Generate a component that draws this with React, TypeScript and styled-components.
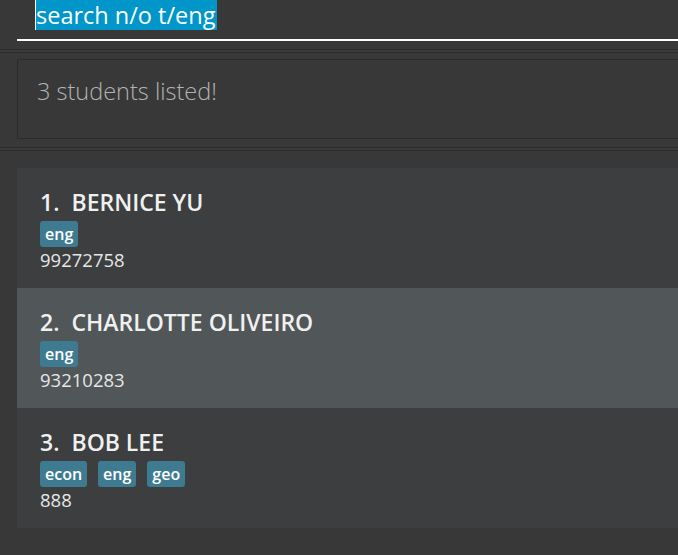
import React from "react";
import styled, { createGlobalStyle } from "styled-components";

const Global = createGlobalStyle`
  html, body { margin: 0; padding: 0; background: #383838; }
  body { font-family: "Open Sans", "Noto Sans", sans-serif; overflow: hidden; }
`;

const Window = styled.div`
  width: 678px;
  height: 555px;
  display: flex;
  flex-direction: column;
  background: #383838;
  overflow: hidden;
`;

const CommandPane = styled.div`
  height: 49px;
  padding-left: 17px;
  box-sizing: border-box;
  flex-shrink: 0;
`;

const CommandField = styled.div`
  height: 41px;
  box-sizing: border-box;
  border-bottom: 2px solid #ffffff;
  padding-left: 18px;
  display: flex;
  align-items: flex-start;
`;

const Selected = styled.span`
  display: inline-block;
  background: #0096c9;
  color: #ffffff;
  font-size: 23.5px;
  line-height: 30px;
  height: 30px;
  padding: 0 2px 0 0;
  border-left: 1px solid #ffffff;
  box-sizing: content-box;
`;

const Divider = styled.div`
  height: 2px;
  border-top: 1px solid #2b2b2b;
  border-bottom: 1px solid #2b2b2b;
  background: #3a3a3a;
  flex-shrink: 0;
`;

const ResultPane = styled.div`
  padding: 6px 0 8px 17px;
  flex-shrink: 0;
`;

const ResultBox = styled.div`
  height: 80px;
  border: 1px solid #2b2b2b;
  border-right: none;
  box-sizing: border-box;
  padding: 14px 19px;
  color: #b3b3b3;
  font-size: 23.5px;
  line-height: 34px;
  font-weight: 300;
`;

const ListPane = styled.div`
  padding: 17px 0 0 17px;
  display: flex;
  flex-direction: column;
`;

const Card = styled.div<{ $selected?: boolean }>`
  height: 120px;
  flex-shrink: 0;
  box-sizing: border-box;
  background: ${(p) => (p.$selected ? "#515658" : "#3c3e3f")};
  padding: 17px 23px 0;
  display: flex;
  flex-direction: column;
  color: #ffffff;
`;

const Name = styled.div`
  font-size: 23px;
  font-weight: 600;
  line-height: 34px;
  color: #f0f0f0;
  display: flex;
  gap: 12px;
`;

const Tags = styled.div`
  display: flex;
  gap: 11px;
  margin-top: 2px;
`;

const Tag = styled.span`
  background: #3e7b91;
  color: #ffffff;
  font-size: 16px;
  font-weight: 600;
  height: 26px;
  line-height: 26px;
  padding: 0 5px;
  border-radius: 3px;
`;

const Phone = styled.div`
  font-size: 18.5px;
  line-height: 24px;
  color: #e6e6e6;
  margin-top: 1px;
`;

const students = [
  { name: "BERNICE YU", tags: ["eng"], phone: "99272758" },
  { name: "CHARLOTTE OLIVEIRO", tags: ["eng"], phone: "93210283", selected: true },
  { name: "BOB LEE", tags: ["econ", "eng", "geo"], phone: "888" },
];

export default function App() {
  return (
    <Window>
      <Global />
      <CommandPane>
        <CommandField>
          <Selected>search n/o t/eng</Selected>
        </CommandField>
      </CommandPane>
      <Divider />
      <ResultPane>
        <ResultBox>3 students listed!</ResultBox>
      </ResultPane>
      <Divider />
      <ListPane>
        {students.map((s, i) => (
          <Card key={s.name} $selected={s.selected}>
            <Name>
              <span>{i + 1}.</span>
              <span>{s.name}</span>
            </Name>
            <Tags>
              {s.tags.map((t) => (
                <Tag key={t}>{t}</Tag>
              ))}
            </Tags>
            <Phone>{s.phone}</Phone>
          </Card>
        ))}
      </ListPane>
    </Window>
  );
}
